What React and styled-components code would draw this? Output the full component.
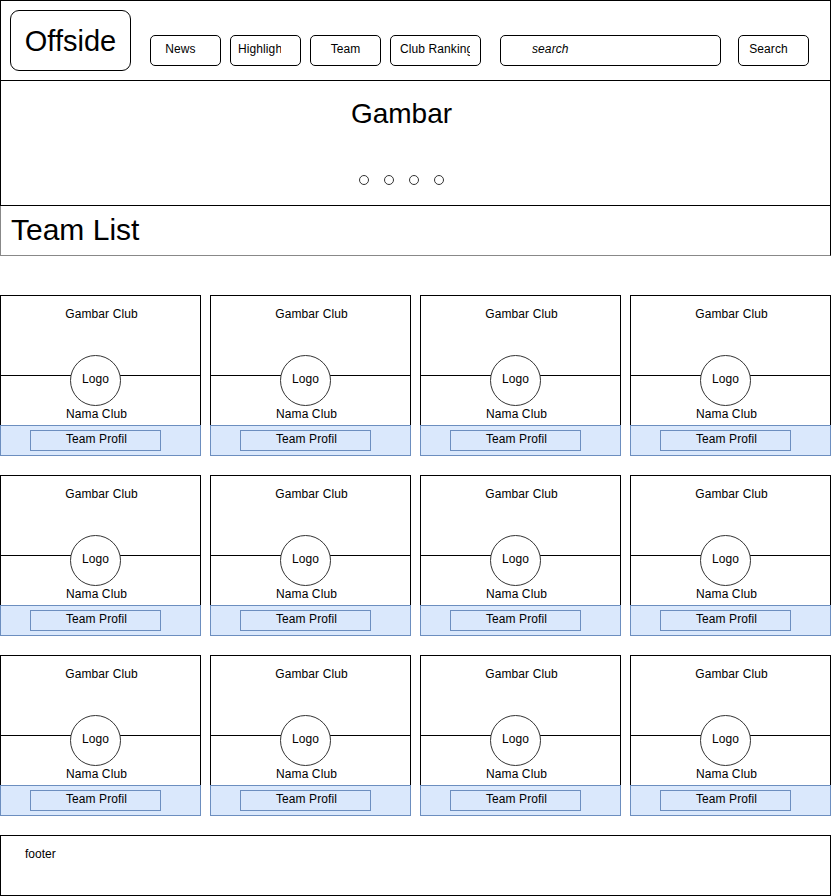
import styled, { createGlobalStyle } from "styled-components";

const GlobalStyle = createGlobalStyle`
    * {
        box-sizing: border-box;
    }
    body {
        margin: 0;
        background: #fff;
        color: #000;
        font-family: "Liberation Sans", Arial, sans-serif;
    }
`;

const Page = styled.div`
    width: 831px;
`;

const Header = styled.header`
    display: flex;
    align-items: flex-start;
    height: 81px;
    padding: 9px 0 0 9px;
    border: 1px solid #000;
`;

const Brand = styled.div`
    display: flex;
    align-items: center;
    justify-content: center;
    width: 121px;
    height: 61px;
    border: 1px solid #000;
    border-radius: 9px;
    font-size: 29px;
    padding-top: 1px;
`;

const Nav = styled.nav`
    display: flex;
    gap: 9px;
    margin: 25px 0 0 19px;
`;

const NavButton = styled.div`
    width: ${(p) => p.$w}px;
    height: 31px;
    margin-left: ${(p) => p.$ml || 0}px;
    padding: 0 ${(p) => p.$pr ?? 7}px 0 ${(p) => p.$pl ?? 7}px;
    border: 1px solid #000;
    border-radius: 5px;
    font-size: 12px;
    line-height: 27px;
    letter-spacing: 0.1px;
    text-align: ${(p) => p.$align || "center"};
    font-style: ${(p) => (p.$italic ? "italic" : "normal")};
    flex-shrink: 0;
`;

const Label = styled.span`
    display: block;
    overflow: hidden;
    white-space: nowrap;
`;

const SearchRow = styled.div`
    display: flex;
    margin-top: 25px;
`;

const Banner = styled.section`
    display: flex;
    flex-direction: column;
    align-items: center;
    height: 125px;
    padding: 17px 28px 0 0;
    border: 1px solid #000;
    border-top: none;
`;

const BannerTitle = styled.div`
    font-size: 28px;
    line-height: 32px;
`;

const Dots = styled.div`
    display: flex;
    gap: 15px;
    margin-top: 45px;
`;

const Dot = styled.span`
    width: 10px;
    height: 10px;
    border: 1px solid #333;
    border-radius: 50%;
`;

const TitleBar = styled.div`
    height: 50px;
    padding: 6px 10px 0;
    border-left: 1px solid #888;
    border-right: 1px solid #000;
    border-bottom: 1px solid #888;
    font-size: 30px;
    line-height: 35px;
`;

const Grid = styled.div`
    display: grid;
    grid-template-columns: repeat(4, 201px);
    column-gap: 9px;
    row-gap: 19px;
    margin-top: 39px;
`;

const Card = styled.div`
    position: relative;
    font-size: 12px;
    line-height: 14px;
    letter-spacing: 0.1px;
`;

const CardTop = styled.div`
    height: 81px;
    padding: 11px 0 0 2px;
    border: 1px solid #000;
    text-align: center;
`;

const CardMid = styled.div`
    height: 49px;
    padding: 31px 8px 0 0;
    border-left: 1px solid #000;
    border-right: 1px solid #000;
    text-align: center;
`;

const CardFoot = styled.div`
    height: 31px;
    padding: 4px 0 0 29px;
    background: #dae8fc;
    border: 1px solid #6c8ebf;
`;

const ProfileButton = styled.div`
    width: 131px;
    height: 21px;
    padding-left: 2px;
    border: 1px solid #6c8ebf;
    line-height: 16px;
    text-align: center;
`;

const LogoCircle = styled.div`
    position: absolute;
    top: 60px;
    left: 70px;
    display: flex;
    align-items: center;
    justify-content: center;
    width: 51px;
    height: 51px;
    padding-bottom: 3px;
    background: #fff;
    border: 1px solid #333;
    border-radius: 50%;
`;

const Footer = styled.footer`
    height: 61px;
    margin-top: 19px;
    padding: 11px 0 0 24px;
    border: 1px solid #000;
    font-size: 12px;
    line-height: 14px;
`;

const navItems = [
    { text: "News", w: 71, pl: 7, pr: 17 },
    { text: "Highlight", w: 71, pl: 7, pr: 19, align: "left" },
    { text: "Team", w: 71 },
    { text: "Club Ranking", w: 91, pl: 9, pr: 10, align: "left" },
];

function ClubCard() {
    return (
        <Card>
            <CardTop>Gambar Club</CardTop>
            <CardMid>Nama Club</CardMid>
            <CardFoot>
                <ProfileButton>Team Profil</ProfileButton>
            </CardFoot>
            <LogoCircle>Logo</LogoCircle>
        </Card>
    );
}

export default function App() {
    return (
        <>
            <GlobalStyle />
            <Page>
                <Header>
                    <Brand>Offside</Brand>
                    <Nav>
                        {navItems.map((n) => (
                            <NavButton key={n.text} $w={n.w} $pl={n.pl} $pr={n.pr} $align={n.align}>
                                <Label>{n.text}</Label>
                            </NavButton>
                        ))}
                    </Nav>
                    <SearchRow>
                        <NavButton $w={221} $ml={19} $pl={31} $align="left" $italic>
                            <Label>search</Label>
                        </NavButton>
                        <NavButton $w={71} $ml={17} $pl={7} $pr={17}>
                            <Label>Search</Label>
                        </NavButton>
                    </SearchRow>
                </Header>

                <Banner>
                    <BannerTitle>Gambar</BannerTitle>
                    <Dots>
                        <Dot />
                        <Dot />
                        <Dot />
                        <Dot />
                    </Dots>
                </Banner>

                <TitleBar>Team List</TitleBar>

                <Grid>
                    {Array.from({ length: 12 }, (_, i) => (
                        <ClubCard key={i} />
                    ))}
                </Grid>

                <Footer>footer</Footer>
            </Page>
        </>
    );
}
